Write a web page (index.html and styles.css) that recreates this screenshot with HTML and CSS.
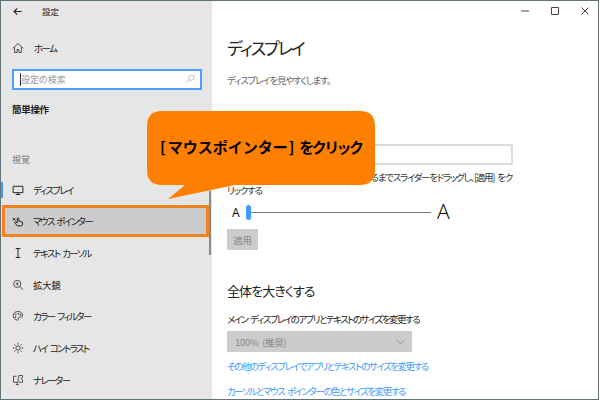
FILE: index.html
```html
<!DOCTYPE html>
<html lang="ja">
<head>
  <meta charset="UTF-8" />
  <title>設定</title>
  <link rel="stylesheet" href="styles.css">
</head>
<body>
  <div class="window">
    <aside class="sidebar">
      <div class="titlebar">
        <svg class="icon" viewBox="0 0 16 16"><path d="M14 8H3M7.500 3.500 3 8l4.500 4.500"/></svg>
        <span class="title">設定</span>
      </div>
      <div class="row home">
        <svg class="icon" viewBox="0 0 16 16"><path d="M1 8.500 8 2l7 6.500M3.500 7v7h3.300v-4h2.400v4h3.300V7"/></svg>
        <span>ホーム</span>
      </div>
      <div class="search">
        <span class="caret"></span>
        <span class="placeholder">設定の検索</span>
        <svg class="search-icon" viewBox="0 0 16 16"><circle cx="10" cy="6" r="4.200"/><path d="M7 9 2 14"/></svg>
      </div>
      <div class="group-title">簡単操作</div>
      <div class="group-label">視覚</div>
      <ul class="menu">
        <li class="row selected">
          <svg class="icon" viewBox="0 0 16 16"><path d="M1.500 3h13v8.500h-13zM8 11.500V14M5 14h6" stroke-width="1.300"/></svg>
          <span>ディスプレイ</span>
        </li>
        <li class="row highlight">
          <svg class="icon" viewBox="0 0 16 16"><path d="M7 14.500 3.500 10l1-1L7 10.500V4.500l1-1 1 1V8l5 1.500V13l-1 1.500zM1 4l3.500 3.500M4.500 4 1 7.500" stroke-width="1.300"/></svg>
          <span>マウス ポインター</span>
        </li>
        <li class="row">
          <svg class="icon" viewBox="0 0 16 16"><path d="M5 2h6M5 14h6M8 2v12" stroke-width="1.300"/></svg>
          <span>テキスト カーソル</span>
        </li>
        <li class="row">
          <svg class="icon" viewBox="0 0 16 16"><circle cx="7" cy="6.500" r="4.800"/><path d="M10.500 10 14.500 14.500M5 6.500h4M7 4.500v4"/></svg>
          <span class="kanji">拡大鏡</span>
        </li>
        <li class="row">
          <svg class="icon" viewBox="0 0 16 16"><path d="M8 2C4 2 1.500 4.500 1.500 7.500S4 13.500 7.500 13.500c1.500 0 1.500-1 1-2s0-2 1.500-2h2.500c1 0 1.500-1 1.500-2.500C14 4 11.500 2 8 2z"/><circle cx="5" cy="6" r=".7"/><circle cx="8.500" cy="5" r=".7"/><circle cx="11.500" cy="6.500" r=".7"/><circle cx="4.500" cy="9.500" r=".7"/></svg>
          <span>カラー フィルター</span>
        </li>
        <li class="row">
          <svg class="icon" viewBox="0 0 16 16"><circle cx="8" cy="8" r="2.800"/><path d="M8 1v2.500M8 12.500V15M1 8h2.500M12.500 8H15M3 3l1.800 1.800M11.200 11.200 13 13M13 3l-1.800 1.800M4.800 11.200 3 13"/></svg>
          <span>ハイ コントラスト</span>
        </li>
        <li class="row">
          <svg class="icon" viewBox="0 0 16 16"><path d="M6 3H2v8h5M5 14h4M7 11v3M9 2h5v3l-2 1 2 2v3H9L7.500 9.500 9 8 7.500 6.500 9 5z"/></svg>
          <span>ナレーター</span>
        </li>
      </ul>
      <span class="scrollbar"></span>
    </aside>

    <main class="content">
      <div class="controls">
        <svg viewBox="0 0 8 8"><path d="M0 4h8"/></svg>
        <svg viewBox="0 0 8 8"><path d="M.5.500h7v7h-7z"/></svg>
        <svg viewBox="0 0 8 8"><path d="m.5.500 7 7M7.500.500l-7 7"/></svg>
      </div>
      <h1>ディスプレイ</h1>
      <p class="subtitle">ディスプレイを見やすくします。</p>
      <div class="sample"></div>
      <p class="hint">サンプル テキストのサイズが読みやすくなるまでスライダーをドラッグし、[適用] をク<br>リックする</p>
      <div class="slider">
        <span class="small-a">A</span>
        <span class="thumb"></span>
        <span class="track"></span>
        <span class="big-a">A</span>
      </div>
      <button class="apply">適用</button>
      <h2>全体を大きくする</h2>
      <p class="label">メイン ディスプレイのアプリとテキストのサイズを変更する</p>
      <div class="select">
        <span>100% (推奨)</span>
        <svg viewBox="0 0 12 7"><path d="m1 1 5 5 5-5"/></svg>
      </div>
      <a class="link" href="#">その他のディスプレイでアプリとテキストのサイズを変更する</a>
      <a class="link" href="#">カーソルとマウス ポインターの色とサイズを変更する</a>
    </main>

    <div class="callout">
      <svg class="callout-shape" viewBox="0 0 230 90"><path d="M15 0H213Q228 0 228 15V59Q228 74 213 74H88L21 88 38 74H15Q0 74 0 59V15Q0 0 15 0z"/></svg>
      <span class="callout-text">[<span class="callout-name">マウスポインター</span>]<span class="callout-tail">をクリック</span></span>
    </div>
  </div>
</body>
</html>
```

FILE: styles.css
```css
* {
  box-sizing: border-box;
  margin: 0;
  padding: 0;
}
body {
  width: 600px;
  height: 400px;
  overflow: hidden;
  background: #fff;
  font-family: "Noto Sans CJK JP", "Noto Sans", sans-serif;
  font-feature-settings: "palt";
  color: #222;
}
svg {
  fill: none;
  stroke: currentColor;
  stroke-width: 1;
}
.window {
  position: relative;
  display: flex;
  width: 599px;
  height: 400px;
  border: 1px solid #5f7378;
  overflow: hidden;
}

/* sidebar */
.sidebar {
  position: relative;
  flex: 0 0 211px;
  background: #e6e6e6;
  font-size: 9.500px;
  letter-spacing: -1.600px;
  word-spacing: 2px;
}
.titlebar {
  display: flex;
  align-items: center;
  height: 20px;
  padding-left: 11px;
}
.titlebar .icon {
  width: 11px;
  height: 11px;
  stroke-width: 1.600;
}
.title {
  margin-left: 19px;
  font-size: 8.500px;
  letter-spacing: 0;
}
.row {
  display: flex;
  align-items: center;
  gap: 9px;
  height: 31.700px;
  padding-left: 11px;
  list-style: none;
}
.icon {
  flex: none;
  width: 12px;
  height: 12px;
}
.kanji {
  font-size: 9.300px;
  letter-spacing: 0;
}
.home {
  margin-top: 11px;
  gap: 10px;
}
.search {
  display: flex;
  align-items: center;
  height: 21px;
  margin: 5px 10px 0 11px;
  padding: 0 5px 0 6px;
  background: #fff;
  border: 2px solid #4da0ff;
  color: #999;
  font-size: 9px;
  letter-spacing: 0;
}
.caret {
  width: 1px;
  height: 13px;
  background: #333;
}
.placeholder {
  flex: 1;
}
.search-icon {
  width: 10px;
  height: 10px;
}
.group-title {
  margin: 9px 0 0 11px;
  font-size: 9.500px;
  font-weight: 700;
  letter-spacing: -.3px;
  line-height: 20px;
}
.group-label {
  margin: 31px 0 0 11px;
  color: #777;
  font-size: 9px;
  letter-spacing: 0;
  line-height: 20px;
}
.menu {
  margin-top: 4px;
}
.selected {
  position: relative;
}
.selected::before {
  content: "";
  position: absolute;
  left: 0;
  top: 8px;
  width: 2px;
  height: 16px;
  background: #3e9bff;
}
.highlight {
  width: 207px;
  margin-left: 1px;
  padding-left: 7px;
  background: #ccc;
  border: 3px solid #f58220;
}
.scrollbar {
  position: absolute;
  right: 1px;
  top: 190px;
  width: 2px;
  height: 64px;
  background: #8a8a8a;
}

/* right pane */
.content {
  flex: 1;
  padding-left: 15px;
  background: #fff;
  font-size: 9.500px;
  letter-spacing: -1.450px;
  word-spacing: 2px;
}
.controls {
  display: flex;
  justify-content: flex-end;
  align-items: center;
  gap: 22px;
  height: 20px;
  padding-right: 9px;
  color: #444;
}
.controls svg {
  width: 8px;
  height: 8px;
}
h1 {
  margin-top: 15px;
  font-size: 17px;
  font-weight: 400;
  letter-spacing: -2px;
  line-height: 24px;
}
.subtitle {
  margin-top: 12px;
  color: #666;
  letter-spacing: -1.200px;
  line-height: 16px;
}
.sample {
  width: 286px;
  height: 21px;
  margin-top: 56px;
  border: 2px solid #ddd;
}
.hint {
  margin-top: 6px;
  letter-spacing: -1.250px;
  line-height: 13px;
  color: #333;
  white-space: nowrap;
}
.slider {
  display: flex;
  align-items: center;
  height: 28px;
  margin: 1px 0 0 5px;
}
.small-a {
  width: 14px;
  font-family: "Open Sans", sans-serif;
  font-size: 12px;
  letter-spacing: 0;
  color: #000;
}
.thumb {
  width: 5px;
  height: 15px;
  border-radius: 3px;
  background: #3e9bff;
}
.track {
  width: 180px;
  height: 1px;
  background: #777;
}
.big-a {
  margin: -3px 0 0 6px;
  font-family: "Open Sans", sans-serif;
  font-size: 21px;
  font-weight: 300;
  letter-spacing: 0;
  line-height: 22px;
  color: #000;
}
.apply {
  display: block;
  width: 31px;
  height: 21px;
  margin-top: 3px;
  border: none;
  background: #ccc;
  color: #888;
  font: inherit;
  letter-spacing: 0;
}
h2 {
  margin-top: 31px;
  font-size: 13px;
  font-weight: 400;
  letter-spacing: -.9px;
  line-height: 20px;
}
.label {
  margin-top: 10px;
  letter-spacing: -1.520px;
  line-height: 16px;
}
.select {
  display: flex;
  justify-content: space-between;
  align-items: center;
  width: 185px;
  height: 21px;
  margin-top: 4px;
  padding: 0 7px 0 8px;
  background: #ccc;
  color: #888;
  letter-spacing: -.3px;
}
.select svg {
  width: 9px;
  height: 6px;
}
.link {
  display: block;
  margin-top: 7px;
  color: #3e9bff;
  text-decoration: none;
  line-height: 15px;
}
.link + .link {
  margin-top: 10px;
}

/* callout over the window */
.callout {
  position: absolute;
  left: 146px;
  top: 110px;
  width: 230px;
  height: 90px;
}
.callout-shape {
  display: block;
  width: 230px;
  height: 90px;
  fill: #ff8000;
  stroke: none;
}
.callout-text {
  position: absolute;
  left: 13px;
  top: 24px;
  font-size: 15px;
  font-weight: 700;
  font-feature-settings: normal;
  line-height: 24px;
  color: #000;
  white-space: nowrap;
}
.callout-name {
  margin: 0 1px 0 2px;
}
.callout-tail {
  margin-left: 5px;
  letter-spacing: -2.600px;
}
```
